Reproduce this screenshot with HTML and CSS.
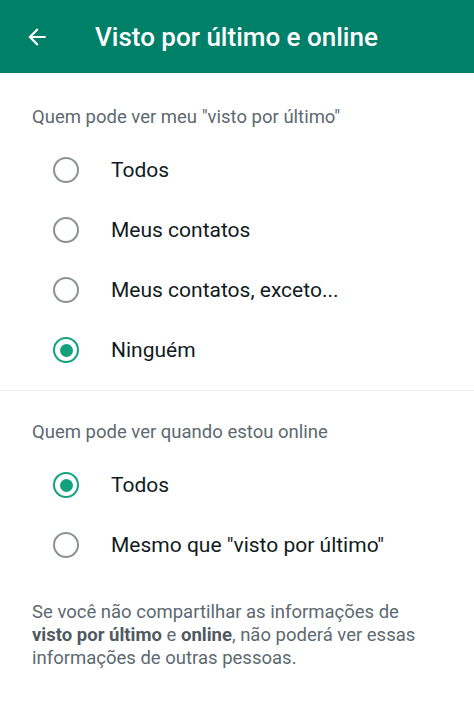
FILE: index.html
```html
<!DOCTYPE html>
<html lang="pt">
<head>
<meta charset="utf-8">
<link rel="stylesheet" href="styles.css">
</head>
<body>
<header class="appbar">
  <svg class="back" width="24" height="24" viewBox="0 0 24 24"><path d="M20 11H7.83l5.59-5.59L12 4l-8 8 8 8 1.41-1.41L7.83 13H20v-2z" fill="#fff"/></svg>
  <h1 class="title">Visto por último e online</h1>
</header>
<main>
  <section class="group">
    <h2 class="group-title">Quem pode ver meu "visto por último"</h2>
    <ul class="options">
      <li class="option"><span class="radio"></span><span class="label">Todos</span></li>
      <li class="option"><span class="radio"></span><span class="label">Meus contatos</span></li>
      <li class="option"><span class="radio"></span><span class="label">Meus contatos, exceto...</span></li>
      <li class="option"><span class="radio checked"></span><span class="label">Ninguém</span></li>
    </ul>
  </section>
  <div class="divider"></div>
  <section class="group second">
    <h2 class="group-title">Quem pode ver quando estou online</h2>
    <ul class="options">
      <li class="option"><span class="radio checked"></span><span class="label">Todos</span></li>
      <li class="option"><span class="radio"></span><span class="label">Mesmo que "visto por último"</span></li>
    </ul>
  </section>
  <p class="note">Se você não compartilhar as informações de <b>visto por último</b> e <b>online</b>, não poderá ver essas informações de outras pessoas.</p>
</main>
</body>
</html>
```
FILE: styles.css
```css
* { box-sizing: border-box; }
html, body { margin: 0; padding: 0; background: #fff; }
body { font-family: Roboto, "Noto Sans", sans-serif; width: 474px; }
.appbar {
  height: 73px;
  background: #008069;
  display: flex;
  align-items: center;
  padding-left: 24px;
}
.back { width: 26px; height: 26px; flex: none; }
.title {
  margin: 0 0 0 45px;
  color: #fff;
  font-size: 26px;
  font-weight: 500;
  line-height: 30px;
}
.group { padding-top: 33px; }
.group.second { padding-top: 30px; }
.group-title {
  margin: 0 0 0 32px;
  font-size: 18.5px;
  font-weight: 400;
  color: #5c6970;
  line-height: 22px;
}
.options { list-style: none; margin: 12px 0 0; padding: 0; }
.option {
  height: 60px;
  display: flex;
  align-items: center;
  padding-left: 53px;
}
.radio {
  width: 26px; height: 26px;
  border: 2.5px solid #8a9296;
  border-radius: 50%;
  flex: none;
  display: flex;
  align-items: center;
  justify-content: center;
}
.radio.checked { border-color: #11a27d; }
.radio.checked::after {
  content: "";
  width: 13px; height: 13px;
  border-radius: 50%;
  background: #11a27d;
}
.label {
  margin-left: 32px;
  font-size: 21px;
  line-height: 26px;
  color: #111b21;
}
.divider { height: 1px; background: #e9edef; margin-top: 10px; }
.note {
  margin: 26px 50px 0 32px;
  font-size: 18.5px;
  line-height: 23px;
  color: #5c6970;
}
.note b { font-weight: 700; color: #4f5a60; }
```
